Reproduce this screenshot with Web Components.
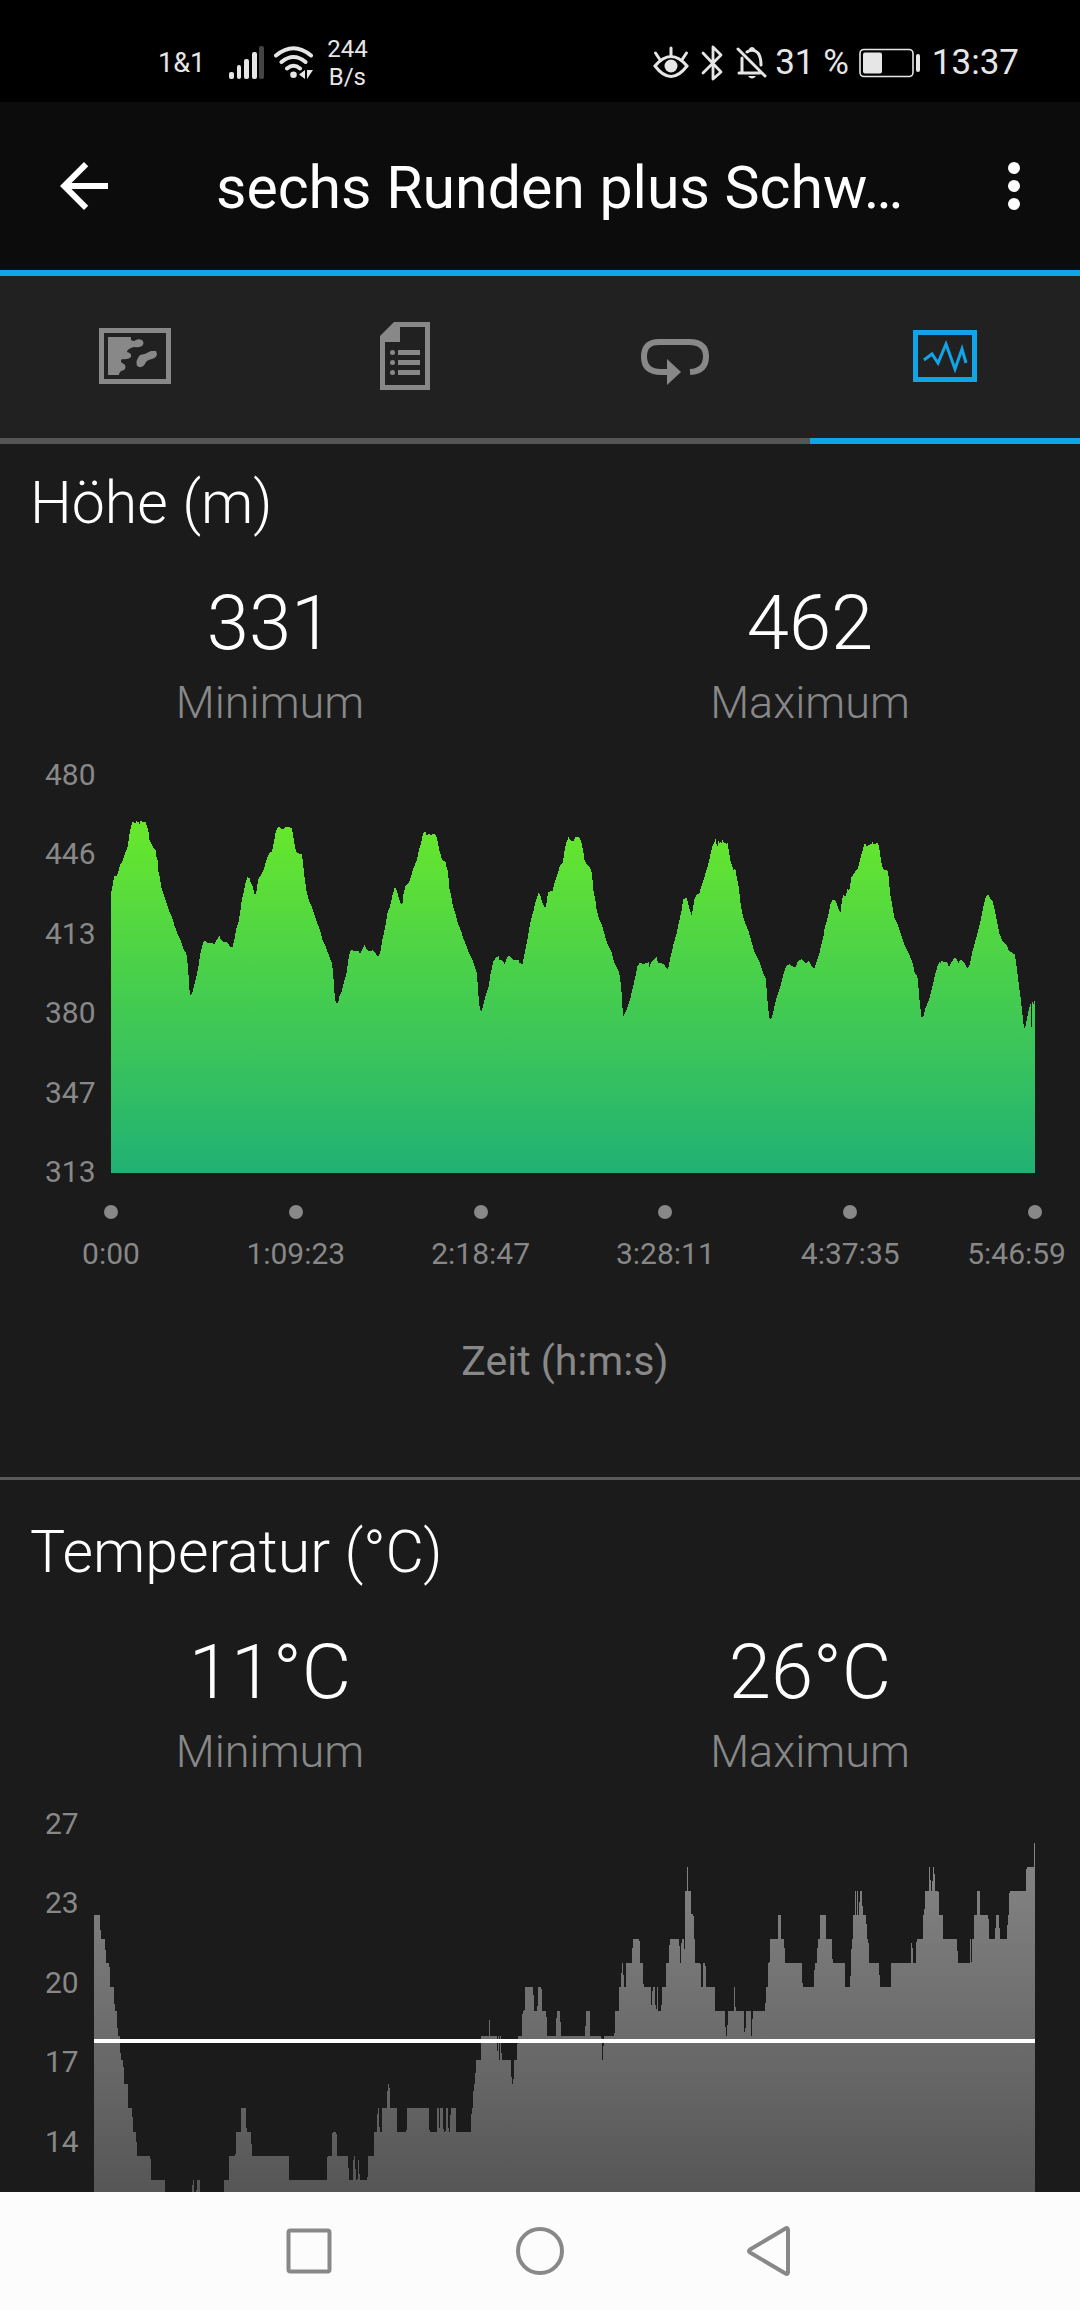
<!DOCTYPE html>
<html lang="de">
<head>
<meta charset="utf-8">
<meta name="viewport" content="width=device-width, initial-scale=1">
<title>Aktivität</title>
<style>
  html, body { height: 100%; margin: 0; }
  body {
    --accent: #11a5e8;
    --muted: #888888;
    background: #1b1b1b;
    color: #ffffff;
    font-family: Roboto, "Noto Sans", sans-serif;
  }
</style>
</head>
<body>
<activity-page></activity-page>

<script>
const define = (name, html, setup) => {
  const template = document.createElement('template');
  template.innerHTML = html;
  customElements.define(name, class extends HTMLElement {
    connectedCallback() {
      if (this.shadowRoot) return;
      const root = this.attachShadow({ mode: 'open' });
      root.append(template.content.cloneNode(true));
      if (setup) setup(this, root);
    }
  });
};

define('status-bar', `
<style>
  :host { display: flex; justify-content: space-between; align-items: center; height: 102px; box-sizing: border-box;
    padding: 24px 61px 0 158px; background: #000; color: #e6e6e6; flex: none; }
  div { display: flex; align-items: center; }
  .carrier { font-size: 27px; line-height: 34px; margin-right: 24px; }
  .rate { font-size: 24px; line-height: 28px; text-align: center; margin-left: 12px; }
  .big { font-size: 35px; line-height: 42px; }
  svg { display: block; flex: none; }
</style>
<div>
  <span class="carrier">1&amp;1</span>
  <svg width="36" height="36" viewBox="0 0 36 36" fill="currentColor">
    <rect x="0" y="27" width="5" height="7" rx="2"/><rect x="8" y="20" width="4" height="14" rx="2"/>
    <rect x="15" y="14" width="5" height="20" rx="2"/><rect x="23" y="7" width="5" height="27" rx="2"/>
    <rect x="30" y="1" width="5" height="33" rx="2" fill="#444"/>
  </svg>
  <svg style="margin-left:8px" width="42" height="36" viewBox="0 0 42 36" fill="none" stroke="currentColor" stroke-width="4" stroke-linecap="round">
    <path d="M3 10.500Q20.500-4 38 10.500M8.500 17Q20.500 7 32.500 17M14 23.500Q20.500 18 27 23.500"/>
    <circle cx="20.500" cy="29.700" r="3.300" fill="currentColor" stroke="none"/>
    <path d="M32 25v9l-6-4.500zM34 34v-9h6z" fill="currentColor" stroke="none"/>
  </svg>
  <span class="rate">244<br>B/s</span>
</div>
<div>
  <svg width="36" height="34" viewBox="0 0 36 34" fill="none" stroke="currentColor" stroke-width="3" stroke-linecap="round">
    <path d="M2 20Q18 1 34 20Q18 41 2 20ZM18 2v7M2.500 7l4 6M33.500 7l-4 6"/><circle cx="18" cy="20" r="6.500" fill="currentColor" stroke="none"/>
  </svg>
  <svg style="margin-left:12px" width="22" height="36" viewBox="0 0 22 36" fill="none" stroke="currentColor" stroke-width="2.800" stroke-linejoin="round" stroke-linecap="round">
    <path d="M2 8L20 27L12 34V2L20 10L2 28"/>
  </svg>
  <svg style="margin:0 8px 0 13px" width="31" height="34" viewBox="0 0 31 34" fill="none" stroke="currentColor" stroke-width="3" stroke-linecap="round">
    <path d="M2 3L29 30M3 27H24M6 26V12M11 6Q17 2 22 7Q25 11 25 19M14 4q2-3 4 0"/><path d="M12 30h8q-4 5-8 0z" fill="currentColor" stroke="none"/>
  </svg>
  <span class="big">31&nbsp;%</span>
  <svg style="margin:0 11px 0 10px" width="62" height="30" viewBox="0 0 62 30">
    <rect x="1" y="1.500" width="53" height="27" rx="4" fill="none" stroke="currentColor" stroke-width="1.600"/>
    <rect x="4" y="4.500" width="19" height="21" rx="2" fill="currentColor"/><rect x="57" y="6" width="4" height="18" rx="2" fill="currentColor"/>
  </svg>
  <span class="big">13:37</span>
</div>`);

define('app-header', `
<style>
  :host { display: flex; align-items: center; height: 168px; background: #0c0c0c; border-bottom: 6px solid var(--accent); flex: none; }
  button { background: none; border: 0; padding: 0; color: inherit; width: 168px; height: 168px; flex: none; display: grid; place-items: center; }
  button.more { width: 132px; }
  h1 { flex: 1; margin: 0 0 0 48px; padding-top: 4px; font-size: 59px; line-height: 70px; font-weight: 400; white-space: nowrap; }
</style>
<button aria-label="Zurück"><svg width="48" height="48" viewBox="0 0 16 16" fill="currentColor"><path d="M16 7H3.830L9.420 1.410 8 0 0 8l8 8 1.410-1.410L3.830 9H16z"/></svg></button>
<h1><slot></slot></h1>
<button class="more" aria-label="Mehr"><svg width="12" height="48" viewBox="0 0 12 48" fill="currentColor"><circle cx="6" cy="6" r="6"/><circle cx="6" cy="24" r="6"/><circle cx="6" cy="42" r="6"/></svg></button>`);

define('tab-item', `
<style>
  :host { display: block; flex: 1; color: #888; border-bottom: 6px solid #555; }
  :host([selected]) { color: var(--accent); border-color: var(--accent); }
  button { width: 100%; height: 162px; background: none; border: 0; padding: 0 1px 2px 0; color: inherit; display: grid; place-items: center; }
</style>
<button role="tab"><slot></slot></button>`, (host, root) => {
  const button = root.querySelector('button');
  button.setAttribute('aria-label', host.getAttribute('label'));
  button.setAttribute('aria-selected', host.hasAttribute('selected'));
});

define('tab-bar', `
<style>:host { display: flex; background: #212121; flex: none; } svg { display: block; }</style>
<tab-item label="Karte"><svg width="72" height="56" viewBox="0 0 72 56" fill="currentColor">
  <path fill-rule="evenodd" d="M0 0H72V56H0ZM5 5V51H67V5Z"/>
  <path d="M9 9H32Q31 13 35 13Q39 10 43 12Q46 15 43 18Q40 20 35 19Q28 21 28 24Q33 25 32 29Q29 32 23 31Q20 34 25 36Q28 39 25 42Q20 43 20 47H9Z"/>
  <path d="M57 23Q60 29 53 31Q47 32 46 36Q43 41 38 38Q36 33 41 27Q47 26 52 23Z"/></svg></tab-item>
<tab-item label="Details"><svg width="50" height="68" viewBox="0 0 50 68" fill="currentColor">
  <path fill-rule="evenodd" d="M14 0H50V68H0V14ZM20 5V20H5V63H45V5Z"/>
  <path d="M18 28h22v5H18zM18 38h22v5H18zM18 48h22v5H18z"/><circle cx="12.500" cy="30.500" r="2.500"/><circle cx="12.500" cy="40.500" r="2.500"/><circle cx="12.500" cy="50.500" r="2.500"/></svg></tab-item>
<tab-item label="Runden"><svg width="68" height="58" viewBox="0 0 68 58">
  <path d="M26 45H20Q3 45 3 29.500T20 15H48Q65 15 65 29.500T49 45" fill="none" stroke="currentColor" stroke-width="6"/><path d="M26 32L40 45L26 58Z" fill="currentColor"/></svg></tab-item>
<tab-item label="Diagramme" selected><svg width="64" height="52" viewBox="0 0 64 52">
  <path fill-rule="evenodd" fill="currentColor" d="M0 0H64V52H0ZM5 5V47H59V5Z"/>
  <path d="M11 30L19 24L25 33L33 14L42 39L49 19L53 33" fill="none" stroke="currentColor" stroke-width="3"/></svg></tab-item>`);

define('stat-value', `
<style>
  :host { flex: 1; display: flex; flex-direction: column; align-items: center; gap: 7px; font-weight: 300; }
  .value { font-size: 76px; line-height: 92px; }
  .label { font-size: 45px; line-height: 53px; color: var(--muted); }
</style>
<span class="value"><slot></slot></span><span class="label"><slot name="label"></slot></span>`);

define('metric-section', `
<style>
  :host { display: block; padding: 37px 0 91px; border-bottom: 3px solid #5a5a5a; }
  h2 { margin: 0 30px 39px; font-size: 59px; line-height: 70px; font-weight: 300; }
  .stats { display: flex; margin-bottom: 28px; }
</style>
<h2><slot name="title"></slot></h2><div class="stats"><slot name="stat"></slot></div><slot></slot>`);

/* Samples are stored in blocks: an x offset, then "x,y" pairs. */
const SERIES = {
  altitude: {
    width: 2772, top: -39, floor: 1149, stepped: false, gradient: [90, '#68e82b', '#21b174'],
    blocks: [
      [-63, '63,312 67,290 70,272 72,259 80,257 85,245 91,222 97,215 103,195 110,178 114,165 116,148 120,125 126,97 132,94 135,102 138,94 146,96 149,102 152,92 158,98 166,94 170,105 175,122 178,148 184,162 190,174 196,177 200,205 204,212 206,256 210,259 213,290 220,310 226,330 232,345 240,370 246,382 254,408 262,430 272,450 280,475 288,490 291,500 294,540 297,570 299,610 303,617 308,605 314,580 320,555 326,525 331,490 336,470 340,456 346,452 352,458 362,459 367,457 372,466 377,455 384,445 388,437 393,450 400,456 408,455 414,460 421,471 427,473 432,455 438,420 446,395 450,370 456,325 462,305 466,280 472,262 478,263 482,276 488,290 494,313 498,313 502,285 506,263 512,257 521,240 527,218 534,196 540,187 546,184 550,165 556,132 562,113 568,109 574,116 582,116 586,112 600,112 606,116 610,140 614,165 618,184 624,190 630,192 634,190 638,208 642,250 646,280 650,305 656,330 664,348 672,370 680,395 690,420 698,452 708,472 718,500 726,520 729,545 732,590 735,625 738,640 744,640 748,620 755,605 762,575 770,548 774,515 780,485 786,480 794,483 806,482 810,491 816,480 824,464 830,477 836,483 850,481 858,492 864,500 870,490 878,445 886,410 892,370 900,350 908,314 915,290 921,305 928,330 934,344 938,338 940,315 946,290 956,280 964,258 970,235 980,212 986,185 994,155 998,137'],
      [927, '12,126 18,128 20,138 26,130 32,136 40,132 48,134 52,150 58,180 64,202 70,214 76,212 80,235 84,245 88,295 94,320 98,345 106,370 114,400 124,425 130,445 140,470 148,492 158,512 166,535 171,552 174,600 177,635 180,660 184,664 190,645 196,620 206,590 212,550 220,515 226,505 236,497 239,512 246,510 254,523 258,510 266,496 272,502 282,510 296,511 298,520 308,521 314,490 322,450 328,415 332,392 340,365 348,330 356,307 362,318 366,335 374,352 378,350 384,306 398,302 402,285 412,255 420,226 428,220 434,180 440,155 446,140 450,150 458,154 462,152 466,140 476,140 484,155 490,185 494,212 502,226 510,232 516,250 520,300 526,330 530,360 538,390 546,405 554,435 562,460 574,485 582,515 592,535 598,550 602,580 606,620 608,665 611,680 614,672 620,660 630,630 638,595 646,560 652,530 660,517 670,522 686,517 689,532 694,515 700,512 710,502 714,518 724,520 732,522 736,530 742,537 746,530 752,500 760,465 770,430 776,400 784,365 790,328 800,324 804,340 814,376 818,360 824,324 830,314 838,310 844,290 854,258 864,225 870,200 878,165 884,156 886,145 890,165 892,170 895,153 900,162 903,153 906,165 908,146 912,163 915,153 918,165 922,156 926,180 932,215 940,240 946,236 950,260 956,290 960,325'],
      [1887, '3,350 8,375 16,400 26,425 36,460 44,488 54,505 62,525 70,550 77,565 80,600 84,650 88,685 94,686 100,665 108,630 118,600 126,570 134,540 140,528 148,523 156,528 168,533 172,515 184,507 190,514 198,520 206,512 212,524 222,537 228,520 238,490 250,440 254,415 264,380 272,340 278,328 286,332 290,340 296,360 302,366 306,330 310,316 318,318 322,298 328,300 334,262 342,250 354,235 360,210 368,180 372,165 376,160 380,170 388,164 396,162 398,156 402,164 412,158 416,165 420,190 426,230 432,240 442,242 446,260 450,310 456,340 462,380 472,400 482,430 494,465 506,490 518,520 524,548 532,560 536,600 540,645 544,680 550,680 556,655 566,632 576,595 584,560 592,530 598,516 602,518 607,511 612,517 622,516 626,531 634,518 640,508 648,502 652,512 656,521 660,508 668,514 674,518 680,532 684,535 690,520 696,490 704,460 714,425 722,390 730,350 738,320 744,312 750,325 758,332 764,360 772,400 778,430 788,455 798,462 806,480 818,490 824,492 828,515 834,565 842,625 848,680 852,716 856,710 862,680 870,645 872,641 873,710 876,710 877,636 880,642 884,632 885,632']
    ]
  },
  temperature: {
    width: 2823, top: -12, floor: 1176, stepped: true, average: [627, 13], gradient: [39, '#868686', '#525252'],
    blocks: [
      [-42, '42,255 60,300 63,327 75,360 78,399 87,411 90,471 102,522 105,543 111,594 114,618 120,669 123,690 129,711 132,762 144,834 156,861 159,906 168,936 171,978 210,987 213,1050 255,1122 336,1065 339,1050 342,1122 348,1080 351,1050 360,1122 432,1050 447,978 465,972 468,906 483,834 498,894 501,906 513,942 516,978 627,1050 741,981 744,978 756,908 759,906 768,911 771,978 804,1014 807,1050 819,990 822,978 825,1017 828,1050 831,1047 834,990 837,1032 840,1050 861,1041 864,978 882,906 891,852 894,834 897,891 900,906 906,834 921,783 924,762 927,774 930,834 951,906 978,900 981,834 1047,900 1050,906 1071,834 1077,894 1080,834 1089,897 1092,906 1095,903 1098,834 1104,894 1107,906 1110,855 1113,834 1128,906'],
      [1098, '33,852 36,834 39,783 42,762 45,729 48,690 63,618 87,570 90,618 111,662 114,618 117,690 120,618 123,669 126,690 153,741 156,762 159,747 162,690 171,642 174,618 186,552 189,543 192,540 195,471 219,495 222,543 231,528 234,471 243,477 246,543 258,561 261,618 288,564 291,543 300,576 303,618 375,588 378,543 390,618 423,624 426,690 429,648 432,618 462,609 465,543 477,471 483,429 486,399 489,435 492,471 498,399 516,354 519,327 537,333 540,399 549,462 552,471 573,525 576,483 579,471 585,525 588,537 591,471 594,543 603,525 606,471 618,399 627,345 630,327 657,348 660,399 663,339 666,327 672,357 675,183 681,111 684,183 693,252 699,258 702,327 705,399 720,402 723,471 729,399 735,408 738,471 765,543 795,591 798,618 801,585 804,543 822,471 825,531 828,543 852,606 855,594 858,543 873,618 876,567 879,543'],
      [1938, '75,519 78,471 84,399 87,396 90,327 114,255 123,327 132,354 135,399 186,459 189,471 222,420 225,399 231,354 234,327 240,255 258,327 276,387 279,399 315,471 330,438 333,357 336,327 339,255 345,183 348,255 351,183 354,255 357,216 360,183 366,228 369,255 378,282 381,327 384,339 387,399 417,435 420,471 453,399 513,339 516,354 519,399 528,336 531,327 549,255 552,237 555,183 567,111 570,150 573,183 576,153 579,111 582,132 585,183 594,186 597,255 609,327 651,363 654,399 690,327 693,396 696,327 702,255 711,183 720,255 744,267 747,327 765,294 768,255 777,294 780,327 801,285 804,255 807,189 810,183 858,117 861,111 882,39']
    ]
  }
};

define('area-chart', `
<style>
  :host { display: grid; grid-template-columns: auto 1fr; column-gap: 15px; padding: 0 45px; color: var(--muted); font-size: 30px; line-height: 36px; }
  .scale { display: flex; flex-direction: column; justify-content: space-between; height: 433px; width: 51px; }
  :host([narrow]) .scale { width: 34px; }
  .scale span { height: 36px; }
  .plot { display: block; width: 100%; height: 396px; margin-top: 20px; }
  .ticks { grid-column: 2; display: flex; justify-content: space-between; margin-top: 15px; }
  .tick { width: 0; display: flex; flex-direction: column; align-items: center; gap: 17px; white-space: nowrap; }
  .tick i { width: 14px; height: 14px; border-radius: 50%; background: currentColor; }
  .tick:last-child span { align-self: flex-end; margin-right: -31px; }
  .unit { grid-column: 2; text-align: center; padding-right: 16px; margin-top: 64px; font-size: 41px; line-height: 50px; }
</style>
<div class="scale"></div>
<svg class="plot" preserveAspectRatio="none" shape-rendering="crispEdges">
  <defs><linearGradient id="fill" gradientUnits="userSpaceOnUse" x1="0" x2="0"><stop offset="0"/><stop offset="1"/></linearGradient></defs>
  <path fill="url(#fill)"/><rect class="average" fill="#fff" width="0"/>
</svg>`, (host, root) => {
  const s = SERIES[host.getAttribute('series')];
  const list = name => (host.getAttribute(name) || '').split(' ');
  root.querySelector('.scale').innerHTML = list('scale').map(v => `<span>${v === '-' ? '' : v}</span>`).join('');

  const svg = root.querySelector('svg');
  svg.setAttribute('viewBox', `0 ${s.top} ${s.width} ${s.floor - s.top}`);
  const points = s.blocks.flatMap(([offset, text]) =>
    text.split(' ').map(p => p.split(',').map(Number)).map(([x, y]) => [x + offset, y]));
  const line = points.map(([x, y]) => s.stepped ? `H${x}V${y}` : `L${x} ${y}`).join('');
  root.querySelector('path').setAttribute('d', `M0 ${s.floor}${line}H${s.width}V${s.floor}Z`);

  const gradient = root.querySelector('linearGradient');
  gradient.setAttribute('y1', s.gradient[0]);
  gradient.setAttribute('y2', s.floor);
  gradient.querySelectorAll('stop').forEach((stop, i) => stop.setAttribute('stop-color', s.gradient[i + 1]));
  if (s.average) {
    const bar = root.querySelector('.average');
    bar.setAttribute('y', s.average[0]);
    bar.setAttribute('height', s.average[1]);
    bar.setAttribute('width', s.width);
  }
  if (host.hasAttribute('ticks')) {
    svg.insertAdjacentHTML('afterend',
      `<div class="ticks">${list('ticks').map(t => `<div class="tick"><i></i><span>${t}</span></div>`).join('')}</div>
       <div class="unit">${host.getAttribute('unit')}</div>`);
  }
});

define('nav-bar', `
<style>
  :host { display: flex; justify-content: center; height: 118px; background: #fcfcfc; color: #888; flex: none; }
  button { width: 230px; background: none; border: 0; padding: 0; color: inherit; display: grid; place-items: center; }
  svg { fill: none; stroke: currentColor; stroke-width: 4; stroke-linejoin: round; }
</style>
<button aria-label="Letzte Apps"><svg width="50" height="50" viewBox="0 0 50 50"><rect x="3.500" y="4.500" width="41" height="41" rx="2"/></svg></button>
<button aria-label="Startseite"><svg width="50" height="50" viewBox="0 0 50 50"><circle cx="25" cy="25" r="22"/></svg></button>
<button aria-label="Zurück"><svg width="50" height="50" viewBox="0 0 50 50"><path d="M40.500 2.500Q43 1 43 4V46Q43 49 40.500 47.500L5 26.500Q3 25 5 23.500Z"/></svg></button>`);

define('activity-page', `
<style>
  :host { display: flex; flex-direction: column; height: 100vh; }
  main { flex: 1; min-height: 0; overflow: hidden; }
  .scrolled { margin-top: -13px; }
</style>
<status-bar></status-bar>
<app-header>sechs Runden plus Schw…</app-header>
<tab-bar role="tablist"></tab-bar>
<main><div class="scrolled">
  <metric-section>
    <span slot="title">Höhe (m)</span>
    <stat-value slot="stat">331<span slot="label">Minimum</span></stat-value>
    <stat-value slot="stat">462<span slot="label">Maximum</span></stat-value>
    <area-chart series="altitude" scale="480 446 413 380 347 313" ticks="0:00 1:09:23 2:18:47 3:28:11 4:37:35 5:46:59" unit="Zeit (h:m:s)"></area-chart>
  </metric-section>
  <metric-section>
    <span slot="title">Temperatur (°C)</span>
    <stat-value slot="stat">11°C<span slot="label">Minimum</span></stat-value>
    <stat-value slot="stat">26°C<span slot="label">Maximum</span></stat-value>
    <area-chart narrow series="temperature" scale="27 23 20 17 14 -"></area-chart>
  </metric-section>
</div></main>
<nav-bar></nav-bar>`);
</script>
</body>
</html>
